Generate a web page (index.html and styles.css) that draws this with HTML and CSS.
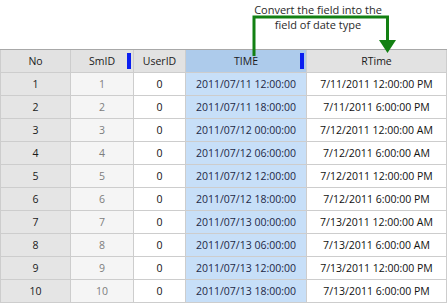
FILE: index.html
```html
<!DOCTYPE html>
<html>
<head>
<meta charset="utf-8">
<link rel="stylesheet" href="styles.css">
</head>
<body>
<div class="page">
  <div class="note">
    <div class="note-text">Convert the field into the<br>field of date type</div>
    <svg class="note-arrow" width="447" height="56" viewBox="0 0 447 56">
      <polyline points="254,56 254,17 387.5,17 387.5,41" fill="none" stroke="#138013" stroke-width="3"/>
      <polygon points="379,40 396,40 387.5,53" fill="#138013"/>
    </svg>
  </div>
  <div class="grid">
    <div class="h">No</div>
    <div class="h">SmID<span class="mark"></span></div>
    <div class="h">UserID</div>
    <div class="h h-time">TIME<span class="mark"></span></div>
    <div class="h">RTime</div>
  </div>
  <div class="grid body" id="rows"></div>
</div>
<script>
var data = [
 ["1","2011/07/11 12:00:00","7/11/2011 12:00:00 PM"],
 ["2","2011/07/11 18:00:00","7/11/2011 6:00:00 PM"],
 ["3","2011/07/12 00:00:00","7/12/2011 12:00:00 AM"],
 ["4","2011/07/12 06:00:00","7/12/2011 6:00:00 AM"],
 ["5","2011/07/12 12:00:00","7/12/2011 12:00:00 PM"],
 ["6","2011/07/12 18:00:00","7/12/2011 6:00:00 PM"],
 ["7","2011/07/13 00:00:00","7/13/2011 12:00:00 AM"],
 ["8","2011/07/13 06:00:00","7/13/2011 6:00:00 AM"],
 ["9","2011/07/13 12:00:00","7/13/2011 12:00:00 PM"],
 ["10","2011/07/13 18:00:00","7/13/2011 6:00:00 PM"]
];
var html = "";
data.forEach(function(r){
  html += '<div class="c c-no">'+r[0]+'</div><div class="c c-sm">'+r[0]+'</div><div class="c c-user">0</div><div class="c c-time">'+r[1]+'</div><div class="c c-r">'+r[2]+'</div>';
});
document.getElementById("rows").innerHTML = html;
</script>
</body>
</html>
```
FILE: styles.css
```css
html, body {
  margin: 0;
  padding: 0;
  background: #ffffff;
}
body {
  font-family: "Open Sans", "Noto Sans", sans-serif;
  font-size: 10.5px;
  color: #1a1a1a;
  width: 447px;
  height: 303px;
  overflow: hidden;
}
.note {
  position: relative;
  height: 49px;
}
.note-text {
  position: absolute;
  left: 238px;
  top: 2px;
  width: 160px;
  text-align: center;
  line-height: 15px;
  font-size: 11px;
  color: #2b2b2b;
  z-index: 2;
}
.note-arrow {
  position: absolute;
  left: 0;
  top: 0;
  z-index: 3;
}
.grid {
  display: grid;
  grid-template-columns: 69px 62px 51px 120px 139px;
  grid-auto-rows: 22px;
  gap: 1px;
  background: #cdcdcd;
  width: 445px;
  padding: 0 1px 1px 1px;
  border-top: 1px solid #a8a8a8;
}
.grid.body {
  border-top: 0;
  padding-bottom: 1px;
}
.h, .c {
  display: flex;
  align-items: center;
  justify-content: center;
  position: relative;
  white-space: nowrap;
}
.h {
  background: #e2e2e2;
  color: #1a1a1a;
}
.h-time {
  background: #adcbeb;
}
.mark {
  position: absolute;
  right: 2px;
  top: 3px;
  width: 4px;
  height: 16px;
  background: #0a1ef0;
}
.c-no {
  background: #e5e5e5;
  color: #1a1a1a;
}
.c-sm {
  background: #f5f5f5;
  color: #7d7d7d;
}
.c-user {
  background: #ffffff;
  color: #111111;
}
.c-time {
  background: #c7dff8;
  color: #1e2846;
}
.c-r {
  background: #ffffff;
  color: #111111;
}
```
